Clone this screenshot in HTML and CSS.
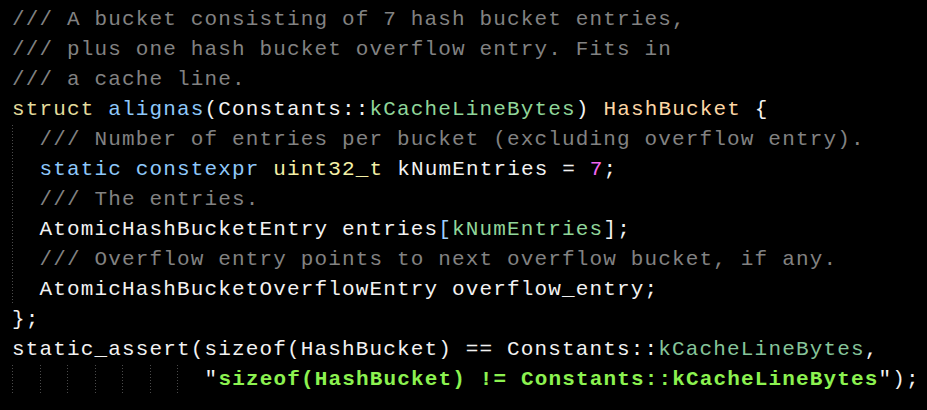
FILE: index.html
```html
<!DOCTYPE html>
<html>
<head>
<meta charset="utf-8">
<link rel="stylesheet" href="styles.css">
</head>
<body>
<div class="code">
<div class="ln"><span class="cm">/// A bucket consisting of 7 hash bucket entries,</span></div>
<div class="ln"><span class="cm">/// plus one hash bucket overflow entry. Fits in</span></div>
<div class="ln"><span class="cm">/// a cache line.</span></div>
<div class="ln"><span class="kw">struct</span> <span class="bl">alignas</span>(Constants::<span class="gr">kCacheLineBytes</span>) <span class="ty">HashBucket</span> {</div>
<div class="ln"><span class="ind">  </span><span class="cm">/// Number of entries per bucket (excluding overflow entry).</span></div>
<div class="ln"><span class="ind">  </span><span class="bl">static</span> <span class="bl">constexpr</span> <span class="kw2">uint32_t</span> kNumEntries = <span class="num">7</span>;</div>
<div class="ln"><span class="ind">  </span><span class="cm">/// The entries.</span></div>
<div class="ln"><span class="ind">  </span>AtomicHashBucketEntry entries<span class="br">[</span><span class="gr">kNumEntries</span>];</div>
<div class="ln"><span class="ind">  </span><span class="cm">/// Overflow entry points to next overflow bucket, if any.</span></div>
<div class="ln"><span class="ind">  </span>AtomicHashBucketOverflowEntry overflow_entry;</div>
<div class="ln">};</div>
<div class="ln">static_assert(sizeof(HashBucket) == Constants::<span class="gr2">kCacheLineBytes</span>,</div>
<div class="ln"><span class="ind">  </span><span class="ind">  </span><span class="ind">  </span><span class="ind">  </span><span class="ind">  </span><span class="ind">  </span><span class="ind">  </span>"<span class="str">sizeof(HashBucket) != Constants::kCacheLineBytes</span>");</div>
</div>
</body>
</html>
```
FILE: styles.css
```css
html, body {
  margin: 0;
  padding: 0;
  background: #000000;
}

.code {
  padding: 5px 0 0 12px;
  font-family: "Liberation Mono", "DejaVu Sans Mono", monospace;
  font-size: 21px;
  letter-spacing: 1.15px;
  color: #f2f2f2;
}

.ln {
  height: 30px;
  line-height: 30px;
  white-space: pre;
}

.ind {
  display: inline-block;
  height: 30px;
  vertical-align: top;
  background-image: repeating-linear-gradient(to bottom, #4a4a4a 0 1px, transparent 1px 3px);
  background-size: 1px 100%;
  background-repeat: no-repeat;
  background-position: left top;
}

.cm { color: #828282; }
.kw { color: #e3dc9c; }
.kw2 { color: #f4f0a6; }
.bl { color: #8ec8fa; }
.gr { color: #90d69a; }
.gr2 { color: #86c49a; }
.ty { color: #fcd6a4; }
.num { color: #f266f0; }
.br { color: #9fd0ff; }
.str { color: #8cf250; font-weight: bold; }
```
